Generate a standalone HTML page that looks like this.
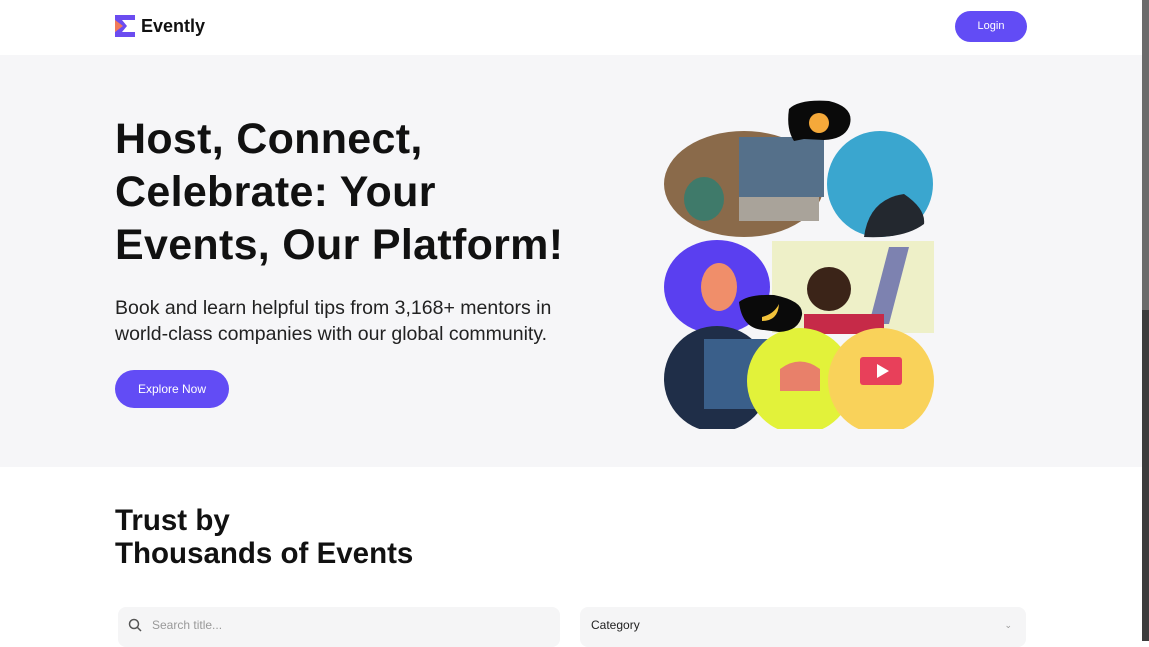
<!DOCTYPE html>
<html><head><meta charset="utf-8"><style>
*{margin:0;padding:0;box-sizing:border-box}
body{width:1149px;height:641px;overflow:hidden;background:#fff;font-family:"Liberation Sans",sans-serif;position:relative;color:#111}
.hdr{position:absolute;left:0;top:0;width:1142px;height:55px;background:#fff}
.logo{position:absolute;left:115px;top:15px;display:flex;align-items:center;gap:6px;font-weight:700;font-size:18px}
.login{position:absolute;left:955px;top:11px;width:72px;height:31px;border-radius:16px;background:#624cf5;color:#fff;font-size:11px;text-align:center;line-height:31px}
.hero{position:absolute;left:0;top:55px;width:1142px;height:412px;background:#f6f6f8}
h1{position:absolute;left:115px;top:58px;font-size:43px;line-height:53px;font-weight:700;letter-spacing:0.3px;color:#111;white-space:nowrap}
.p{position:absolute;left:115px;top:240px;font-size:19.5px;line-height:26px;color:#222;white-space:nowrap}
.btn{position:absolute;left:115px;top:315px;width:114px;height:38px;border-radius:19px;background:#624cf5;color:#fff;font-size:12px;text-align:center;line-height:38px}
h2{position:absolute;left:115px;top:504px;font-size:29.5px;line-height:33px;font-weight:700}
.in{position:absolute;top:607px;height:40px;background:#f5f5f6;border-radius:8px;font-size:12px;line-height:36px;color:#999}
.sb{position:absolute;left:1142px;top:0;width:7px;height:641px;background:#3c3c3c}
.sb div{width:7px;height:310px;background:#6b6b6b}
</style></head><body>
<div class="hdr">
<div class="logo"><svg width="20" height="22" viewBox="0 0 20 22"><path d="M0 0H20V5H7L12 11L7 17H20V22H0V17L5 11L0 5Z" fill="#6b4cf0"/><path d="M0 5L8 11L0 17Z" fill="#f07a5a"/></svg>Evently</div>
<div class="login">Login</div>
</div>
<div class="hero">
<h1>Host, Connect,<br>Celebrate: Your<br>Events, Our Platform!</h1>
<div class="p">Book and learn helpful tips from 3,168+ mentors in<br>world-class companies with our global community.</div>
<div class="btn">Explore Now</div>
<svg style="position:absolute;left:664px;top:44px" width="272" height="330" viewBox="0 0 272 330">
<ellipse cx="80" cy="85" rx="80" ry="53" fill="#8a6a4a"/>
<rect x="75" y="38" width="85" height="60" fill="#55708a"/>
<rect x="75" y="98" width="80" height="24" fill="#a9a39a"/>
<ellipse cx="40" cy="100" rx="20" ry="22" fill="#3f7a6a"/>
<circle cx="216" cy="85" r="53" fill="#3aa6cf"/>
<path d="M200 138 Q205 100 240 95 Q262 110 260 125 Q240 140 200 138Z" fill="#23282f"/>
<ellipse cx="53" cy="188" rx="53" ry="47" fill="#5a3ff0"/>
<ellipse cx="55" cy="188" rx="18" ry="24" fill="#f08e6a"/>
<rect x="108" y="142" width="162" height="92" fill="#eef0c8"/>
<path d="M225 148 L245 148 L225 225 L205 225Z" fill="#7d82b0"/>
<circle cx="165" cy="190" r="22" fill="#3b2418"/>
<rect x="140" y="215" width="80" height="20" fill="#c62a48"/>
<circle cx="53" cy="280" r="53" fill="#1f2e48"/>
<rect x="40" y="240" width="65" height="70" fill="#3a5f8a"/>
<ellipse cx="136" cy="282" rx="53" ry="53" fill="#e2f23a"/>
<path d="M116 270 Q136 255 156 270 L156 292 L116 292Z" fill="#e8806a"/>
<ellipse cx="217" cy="282" rx="53" ry="53" fill="#f9d25a"/>
<rect x="196" y="258" width="42" height="28" rx="3" fill="#e8405a"/>
<path d="M213 265 L225 272 L213 279Z" fill="#fff"/>
<path d="M125 10 Q135 0 165 2 Q190 8 186 25 Q182 40 160 41 L140 40 L130 42 Q122 30 125 10Z" fill="#0a0a0a"/>
<circle cx="155" cy="24" r="10" fill="#f5a93a"/>
<path d="M75 203 Q85 195 110 196 Q140 202 138 216 Q135 232 115 233 L100 231 Q78 230 75 203Z" fill="#0a0a0a"/>
<path d="M98 218 Q110 215 115 205 Q114 222 98 222Z" fill="#f2c23a"/>
</svg>
</div>
<h2>Trust by<br>Thousands of Events</h2>
<div class="in" style="left:118px;width:442px;padding-left:34px"><svg style="position:absolute;left:10px;top:11px" width="14" height="14" viewBox="0 0 14 14"><circle cx="6" cy="6" r="4.5" fill="none" stroke="#555" stroke-width="1.5"/><path d="M9.5 9.5L13 13" stroke="#555" stroke-width="1.5"/></svg>Search title...</div>
<div class="in" style="left:580px;width:446px;padding-left:11px;color:#222">Category<span style="position:absolute;right:14px;color:#999;font-size:9px">⌄</span></div>
<div class="sb"><div></div></div>
</body></html>
